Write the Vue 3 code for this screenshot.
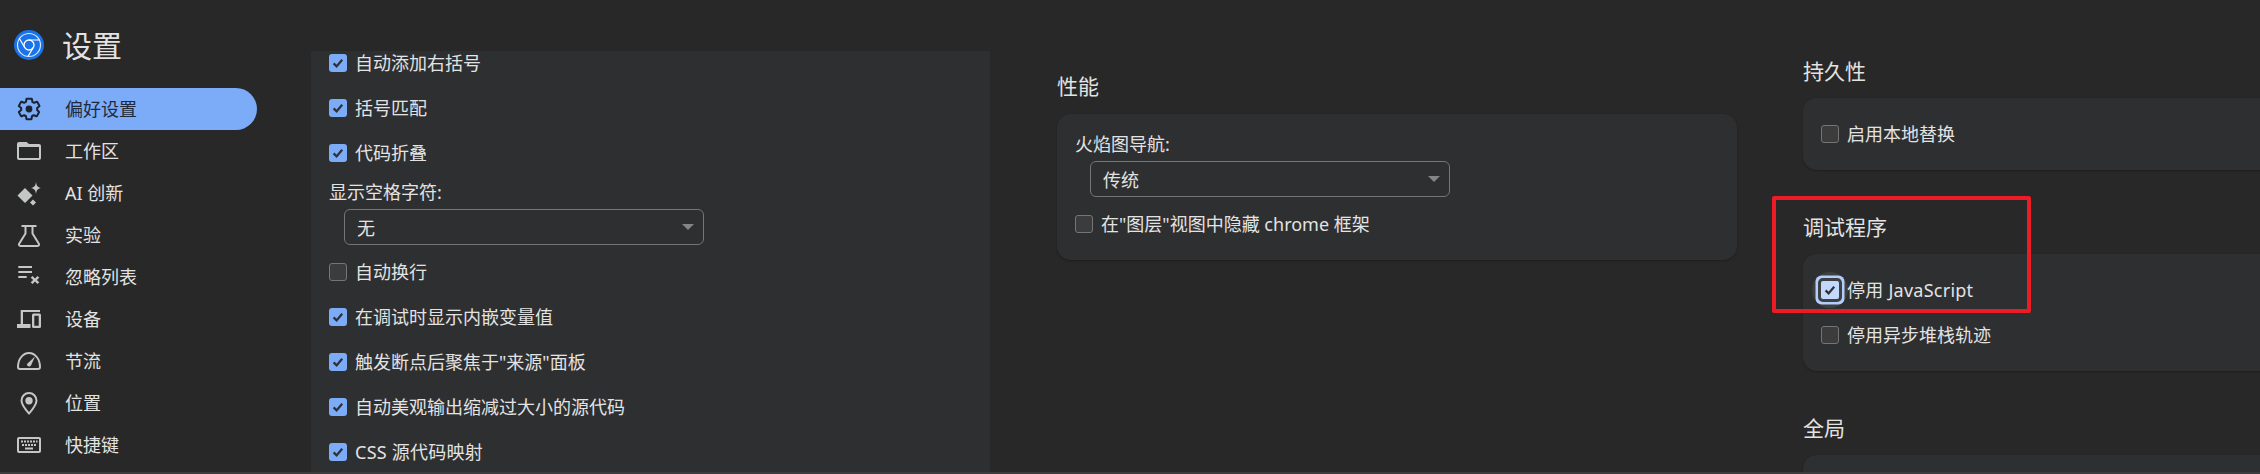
<template>
  <div class="page">
    <div class="body">
      <aside class="sidebar">
        <header class="brand">
          <svg class="logo" viewBox="0 0 30 30">
            <circle cx="15" cy="15" r="15" fill="#1a73e8" />
            <circle cx="15" cy="15" r="11.5" fill="none" stroke="#d6e6fb" stroke-width="1.2" />
            <circle cx="15" cy="15" r="5" fill="none" stroke="#fff" stroke-width="1.3" />
            <path d="M15 10h10.6M10.7 17.5L5.4 8.5M19.3 17.5L14 26.4" fill="none" stroke="#fff" stroke-width="1.2" />
          </svg>
          <h1>设置</h1>
        </header>
        <nav class="nav">
          <a v-for="item in navItems" :key="item.label" class="nav-item" :class="{ active: item.active }">
            <svg class="nav-icon" viewBox="0 0 24 24">
              <path v-if="item.fill" :d="item.fill" fill="currentColor" fill-rule="evenodd" />
              <path v-if="item.line" :d="item.line" fill="none" stroke="currentColor" stroke-width="2" stroke-linejoin="round" />
            </svg>
            <span class="nav-label">{{ item.label }}</span>
          </a>
        </nav>
      </aside>

      <main class="columns">
        <section class="col-sources">
          <div class="card clipped">
            <div class="rows-top">
              <label v-for="row in sourcesTop" :key="row.text" class="check-row">
                <span class="box" :class="{ on: row.on }">
                  <svg v-if="row.on" viewBox="0 0 18 18"><path d="M4.6 9.4l3 3 5.6-6.6" /></svg>
                </span>
                <span>{{ row.text }}</span>
              </label>
            </div>
            <div class="field-label">显示空格字符:</div>
            <div class="select">
              <span>无</span>
              <i class="arrow"></i>
            </div>
            <label v-for="row in sourcesBottom" :key="row.text" class="check-row" :class="{ 'wide-latin': row.wide }">
              <span class="box" :class="{ on: row.on }">
                <svg v-if="row.on" viewBox="0 0 18 18"><path d="M4.6 9.4l3 3 5.6-6.6" /></svg>
              </span>
              <span>{{ row.text }}</span>
            </label>
          </div>
        </section>

        <section class="col-perf">
          <h2>性能</h2>
          <div class="card">
            <div class="field-label">火焰图导航:</div>
            <div class="select">
              <span>传统</span>
              <i class="arrow"></i>
            </div>
            <label class="check-row">
              <span class="box"></span>
              <span>在"图层"视图中隐藏 chrome 框架</span>
            </label>
          </div>
        </section>

        <section class="col-right">
          <div class="group">
            <h2>持久性</h2>
            <div class="card">
              <label class="check-row">
                <span class="box"></span>
                <span>启用本地替换</span>
              </label>
            </div>
          </div>
          <div class="group debugger">
            <h2>调试程序</h2>
            <div class="card">
              <label class="check-row wide-latin">
                <span class="box on focused">
                  <svg viewBox="0 0 18 18"><path d="M4.6 9.4l3 3 5.6-6.6" /></svg>
                </span>
                <span>停用 JavaScript</span>
              </label>
              <label class="check-row">
                <span class="box"></span>
                <span>停用异步堆栈轨迹</span>
              </label>
            </div>
            <div class="marker"></div>
          </div>
          <div class="group">
            <h2>全局</h2>
            <div class="card"></div>
          </div>
        </section>
      </main>
    </div>
    <div class="bottom-strip"></div>
  </div>
</template>

<script setup>
const navItems = [
  {
    label: "偏好设置",
    active: true,
    line: "M20.1 13c.04-.33.07-.66.07-1s-.03-.67-.08-1l2.2-1.7c.2-.15.25-.44.13-.66l-2.08-3.6c-.13-.24-.4-.31-.64-.24l-2.6 1.04c-.54-.41-1.12-.76-1.75-1.02l-.39-2.75c-.04-.26-.26-.44-.52-.44H9.9c-.26 0-.47.18-.51.44l-.39 2.75c-.64.26-1.22.62-1.75 1.02l-2.6-1.04c-.24-.09-.51 0-.64.24l-2.08 3.6c-.13.23-.09.51.13.66L4.260 11c-.05.33-.1.68-.1 1s.02.69.08 1l-2.2 1.7c-.2.15-.25.44-.13.66l2.08 3.6c.13.24.4.31.64.24l2.6-1.04c.54.41 1.12.76 1.75 1.02l.39 2.75c.05.26.26.44.52.44h4.160c.26 0 .48-.18.51-.44l.39-2.75c.64-.26 1.22-.61 1.75-1.02l2.6 1.04c.24.09.51 0 .64-.24l2.08-3.6c.13-.24.08-.51-.13-.66z",
    fill: "M12 8.6a3.4 3.4 0 100 6.8 3.4 3.4 0 000-6.8z",
  },
  {
    label: "工作区",
    fill: "M0 5a2 2 0 012-2h7.500L12 5h10a2 2 0 012 2v12a2 2 0 01-2 2H2a2 2 0 01-2-2zM2 8v11h20V8z",
  },
  {
    label: "AI 创新",
    fill: "M8 7l7.500 7.500L8 22 .5 14.500zM19 1c.5 3.800 1.700 5.300 5 6-3.300.7-4.500 2.200-5 6-.5-3.800-1.700-5.300-5-6 3.300-.7 4.500-2.200 5-6zM16 18.500l3 3-3 3-3-3z",
  },
  {
    label: "实验",
    line: "M4.500 3h15M8.500 3v7.500L2 21a1.500 1.500 0 001.300 2h17.400a1.500 1.500 0 001.300-2l-6.500-10.500V3",
  },
  {
    label: "忽略列表",
    fill: "M1.300 1H15v2H1.300zM1.300 6H15v2H1.300zM1.300 11H9.700v2H1.300zM15.500 11l2.500 2.500 2.500-2.500 1.800 1.800-2.500 2.200 2.500 2.200-1.800 1.800-2.500-2.500-2.500 2.500-1.800-1.800 2.500-2.200-2.500-2.200z",
  },
  {
    label: "设备",
    fill: "M3.700 3H23v2H6v12h7.500v4H0v-4h3.700zM16.500 6.500h6A1.500 1.500 0 0124 8v11.500a1.500 1.500 0 01-1.500 1.500h-6a1.500 1.500 0 01-1.500-1.500V8a1.500 1.500 0 011.500-1.500zM17.300 8.800v10h4.400v-10z",
  },
  {
    label: "节流",
    line: "M3 20h18a2 2 0 002-2C23 10 18 4 12 4S1 10 1 18a2 2 0 002 2z",
    fill: "M18 7.500l-4 9a2.200 2.200 0 01-4-1.600z",
  },
  {
    label: "位置",
    line: "M12 2a7.500 7.500 0 00-7.500 7.500c0 4.500 4 9 7.500 13 3.500-4 7.500-8.500 7.500-13A7.500 7.500 0 0012 2z",
    fill: "M12 6a3.700 3.700 0 100 7.400A3.700 3.700 0 0012 6z",
  },
  {
    label: "快捷键",
    fill: "M2 4h20a2 2 0 012 2v12a2 2 0 01-2 2H2a2 2 0 01-2-2V6a2 2 0 012-2zm0 2v12h20V6zM4 7.500h2v2H4zm3 0h2v2H7zm3 0h2v2h-2zm3 0h2v2h-2zm3 0h2v2h-2zm3 0h1.500v2H19zM5 11h2v2H5zm3 0h2v2H8zm3 0h2v2h-2zm3 0h2v2h-2zm3 0h2v2h-2zM8 14.500h8V16.500H8z",
  },
];

const sourcesTop = [
  { text: "自动添加右括号", on: true },
  { text: "括号匹配", on: true },
  { text: "代码折叠", on: true },
];

const sourcesBottom = [
  { text: "自动换行", on: false },
  { text: "在调试时显示内嵌变量值", on: true },
  { text: '触发断点后聚焦于"来源"面板', on: true },
  { text: "自动美观输出缩减过大小的源代码", on: true },
  { text: "CSS 源代码映射", on: true, wide: true },
];
</script>

<style scoped>
.page {
  display: flex;
  flex-direction: column;
  height: 474px;
  overflow: hidden;
  background: #282828;
  color: #e3e3e3;
  font-family: "Noto Sans", "Noto Sans CJK SC", sans-serif;
  font-size: 18px;
}

.body {
  display: flex;
  flex: 1;
  min-height: 0;
}

.bottom-strip {
  height: 2px;
  background: #3c3c3c;
}

.sidebar {
  flex: 0 0 311px;
}

.brand {
  display: flex;
  align-items: center;
  gap: 18px;
  height: 88px;
  padding: 0 0 0 14px;
  box-sizing: border-box;
  margin-top: 1px;
  margin-bottom: -1px;
}

.logo {
  width: 30px;
  height: 30px;
}

.brand h1 {
  margin: 0;
  padding-top: 2px;
  font-size: 30px;
  font-weight: 400;
  line-height: 40px;
}

.nav {
  display: flex;
  flex-direction: column;
}

.nav-item {
  display: flex;
  align-items: center;
  gap: 24px;
  width: 257px;
  height: 42px;
  padding-left: 17px;
  box-sizing: border-box;
  border-radius: 0 21px 21px 0;
  color: #e3e3e3;
}

.nav-icon {
  flex: none;
  width: 24px;
  height: 24px;
  color: #c4c7c5;
  overflow: visible;
}

.nav-label {
  margin-top: -2px;
}

.nav-item.active {
  background: #7cacf8;
  color: #1f2a3c;
}

.nav-item.active .nav-icon {
  color: #1b2330;
}

.columns {
  display: flex;
  flex: 1;
  min-width: 0;
  overflow: hidden;
}

.col-sources {
  flex: 0 0 679px;
  padding-top: 51px;
  margin-right: 67px;
}

.col-perf {
  flex: 0 0 680px;
  padding-top: 71px;
  margin-right: 66px;
}

.col-perf h2 {
  margin-bottom: 13px;
}

.col-right {
  flex: 1 0 520px;
  padding-top: 56px;
}

h2 {
  margin: 0 0 12px;
  font-size: 21px;
  font-weight: 400;
  line-height: 30px;
}

.card {
  padding: 14px 18px 13px;
  background: #2e2f31;
  border-radius: 14px;
  box-shadow: 0 1px 2px rgba(0, 0, 0, 0.25);
}

.clipped {
  height: 100%;
  padding-top: 0;
  padding-bottom: 0;
  border-radius: 0;
  box-sizing: border-box;
  overflow: hidden;
  box-shadow: none;
}

.rows-top {
  margin-top: -10px;
}

.group {
  position: relative;
  margin-bottom: 42px;
}

.group:last-child .card {
  height: 60px;
}

.check-row {
  display: flex;
  align-items: center;
  gap: 8px;
  height: 44px;
  margin-bottom: 1px;
  line-height: 24px;
  white-space: nowrap;
}

.wide-latin {
  letter-spacing: 0.25px;
}

.box {
  position: relative;
  flex: none;
  width: 18px;
  height: 18px;
  box-sizing: border-box;
  border: 1.5px solid #757575;
  border-radius: 3px;
  background: #3c3c3c;
}

.box.on {
  border: 0;
  background: #7cacf8;
}

.box svg {
  display: block;
  width: 18px;
  height: 18px;
  fill: none;
  stroke: #303134;
  stroke-width: 2.3;
}

.box.focused {
  background: #c2d9fc;
  box-shadow:
    0 0 0 3px #3c4043,
    0 0 0 5.5px #b3cefb;
  border-radius: 2px;
}

.box.focused::before {
  content: "";
  position: absolute;
  inset: -9px;
  border-radius: 50%;
  background: rgba(255, 255, 255, 0.08);
  z-index: -1;
}

.field-label {
  height: 33px;
  line-height: 32px;
}

.select {
  display: flex;
  align-items: center;
  justify-content: space-between;
  width: 360px;
  height: 36px;
  margin: 0 0 5px 15px;
  padding: 0 9px 0 12px;
  box-sizing: border-box;
  border: 1px solid #757575;
  border-radius: 6px;
}

.arrow {
  width: 0;
  height: 0;
  border-left: 6px solid transparent;
  border-right: 6px solid transparent;
  border-top: 6px solid #858585;
}

.debugger .card {
  position: relative;
  z-index: 0;
}

.marker {
  position: absolute;
  left: -31px;
  top: -16px;
  width: 259px;
  height: 117px;
  box-sizing: border-box;
  border: 4px solid #ed1c24;
  border-radius: 2px;
  z-index: 1;
}
</style>

<style>
html,
body {
  margin: 0;
  background: #282828;
}
</style>
